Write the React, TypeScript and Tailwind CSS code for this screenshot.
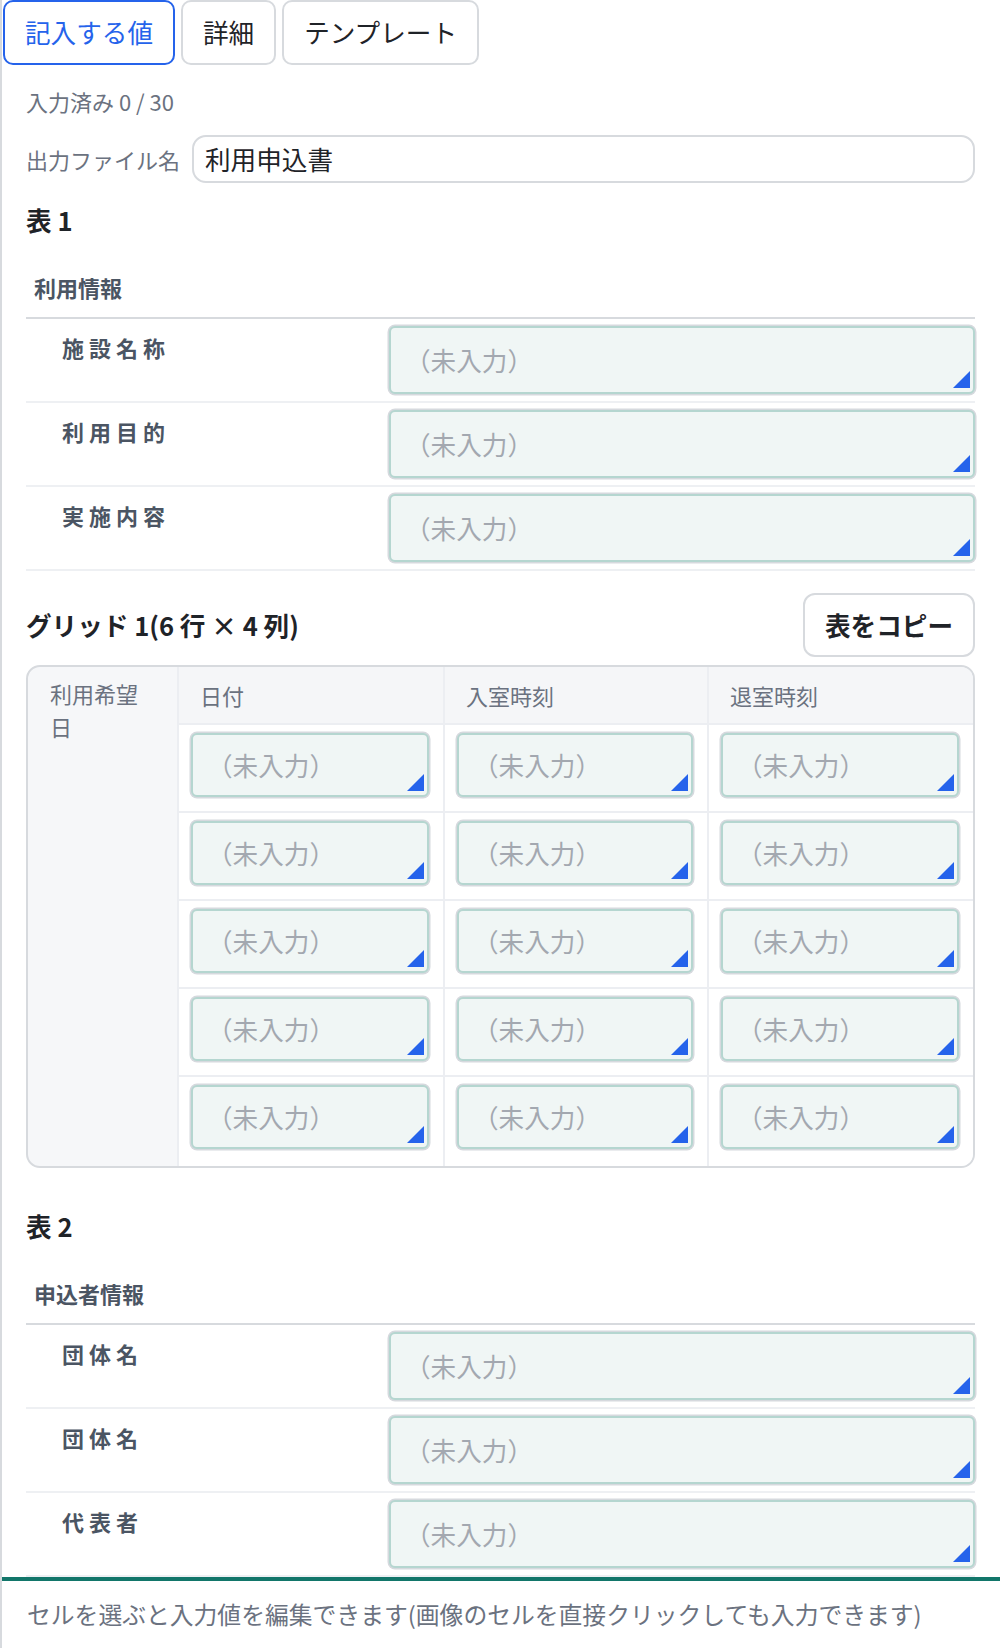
import React from 'react';

const font = "font-['Noto_Sans_CJK_JP','Noto_Sans',sans-serif]";

const Corner: React.FC = () => (
  <svg className="absolute bottom-[4px] right-[3px]" width="17" height="17" viewBox="0 0 17 17">
    <polygon points="17,0 17,17 0,17" fill="#2563eb" />
  </svg>
);

// 未入力のセル
const EmptyField: React.FC<{ tall?: boolean }> = ({ tall }) => (
  <div
    className={
      tall
        ? 'relative flex h-[68px] items-center rounded-[6px] border-2 border-[#b5d6d0] bg-[#f0f6f5] pl-[14px] shadow-[0_0_0_1.5px_#d6d9de]'
        : 'relative flex h-[64px] items-center rounded-[6px] border-2 border-[#b5d6d0] bg-[#f0f6f5] pl-[14px] shadow-[0_0_0_1.5px_#d6d9de]'
    }
  >
    <span className="text-[25.6px] leading-none text-[#a3a8b0]">（未入力）</span>
    <Corner />
  </div>
);

const FormRow: React.FC<{ label: string }> = ({ label }) => (
  <div className="flex border-b-2 border-[#eef0f3] py-[7px]">
    <div className="w-[363px] shrink-0 pl-[36px] pt-[5px] text-[22px] font-bold leading-[33px] tracking-[5px] text-[#4b5563]">
      {label}
    </div>
    <div className="flex-1">
      <EmptyField tall />
    </div>
  </div>
);

const Section: React.FC<{ title: string; heading: string; rows: string[] }> = ({ title, heading, rows }) => (
  <div>
    <h2 className="text-[25.6px] font-bold leading-[38px] text-[#1f2328]">{title}</h2>
    <div className="mt-[32px] border-b-2 border-[#d7dade] px-[8px] pb-[13px] text-[22px] font-bold leading-[33px] text-[#4b5563]">
      {heading}
    </div>
    {rows.map((r, i) => (
      <FormRow key={i} label={r} />
    ))}
  </div>
);

const GridCell: React.FC<{ last: boolean }> = ({ last }) => (
  <div
    className={
      last
        ? 'border-l-2 border-[#eceef2] bg-white pl-[12px] pr-[14px] pt-[8px] pb-[17px]'
        : 'border-b-2 border-l-2 border-[#eceef2] bg-white pl-[12px] pr-[14px] pt-[8px] pb-[14px]'
    }
  >
    <EmptyField />
  </div>
);

const App: React.FC = () => {
  const cols = ['日付', '入室時刻', '退室時刻'];
  const gridRows = [0, 1, 2, 3, 4];

  return (
    <div className={`${font} min-h-[1648px] border-l-2 border-[#d7dade] bg-white text-[#1f2328]`}>
      {/* Tabs */}
      <div className="ml-[1px] flex gap-[6px]">
        <button className="h-[65px] rounded-[10px] border-2 border-[#2563eb] px-[20px] text-[25.6px] text-[#2563eb]">
          記入する値
        </button>
        <button className="h-[65px] rounded-[10px] border-2 border-[#d7dade] px-[20px] text-[25.6px] text-[#1f2328]">
          詳細
        </button>
        <button className="h-[65px] rounded-[10px] border-2 border-[#d7dade] px-[20px] text-[25.6px] text-[#1f2328]">
          テンプレート
        </button>
      </div>

      <div className="pl-[24px] pr-[25px]">
        <p className="mt-[20px] text-[22px] leading-[33px] text-[#6b7280]">入力済み 0 / 30</p>

        <div className="mt-[17px] flex items-center gap-[12px]">
          <span className="text-[22px] leading-[33px] text-[#6b7280]">出力ファイル名</span>
          <div className="flex h-[48px] flex-1 items-center rounded-[14px] border-2 border-[#d7dade] pl-[11px] text-[25.6px]">
            利用申込書
          </div>
        </div>

        <div className="mt-[18px]">
          <Section title="表 1" heading="利用情報" rows={['施設名称', '利用目的', '実施内容']} />
        </div>

        {/* Grid */}
        <div className="mt-[22px] flex items-center justify-between">
          <h2 className="text-[25.6px] font-bold leading-[38px]">グリッド 1(6 行 × 4 列)</h2>
          <button className="h-[64px] rounded-[12px] border-2 border-[#d7dade] px-[20px] text-[25.6px] font-bold">
            表をコピー
          </button>
        </div>

        <div className="mt-[8px] grid grid-cols-[149px_266px_264px_1fr] overflow-hidden rounded-[14px] border-2 border-[#d7dade] bg-[#f6f7f9]">
          <div className="row-span-6 px-[22px] pt-[10px] text-[22px] leading-[33px] text-[#6b7280]">利用希望日</div>
          {cols.map((c) => (
            <div
              key={c}
              className="flex h-[58px] items-center border-b-2 border-l-2 border-[#eceef2] bg-[#f5f6f8] px-[21px] text-[22px] text-[#6b7280]"
            >
              {c}
            </div>
          ))}
          {gridRows.map((r) =>
            cols.map((c) => <GridCell key={`${r}-${c}`} last={r === gridRows.length - 1} />)
          )}
        </div>

        <div className="mt-[39px]">
          <Section title="表 2" heading="申込者情報" rows={['団体名', '団体名', '代表者']} />
        </div>
      </div>

      <div className="border-t-4 border-[#12766a] pt-[15px] pb-[13px] pl-[25px] text-[23.8px] leading-[36px] text-[#6b7280]">
        セルを選ぶと入力値を編集できます(画像のセルを直接クリックしても入力できます)
      </div>
    </div>
  );
};

export default App;
